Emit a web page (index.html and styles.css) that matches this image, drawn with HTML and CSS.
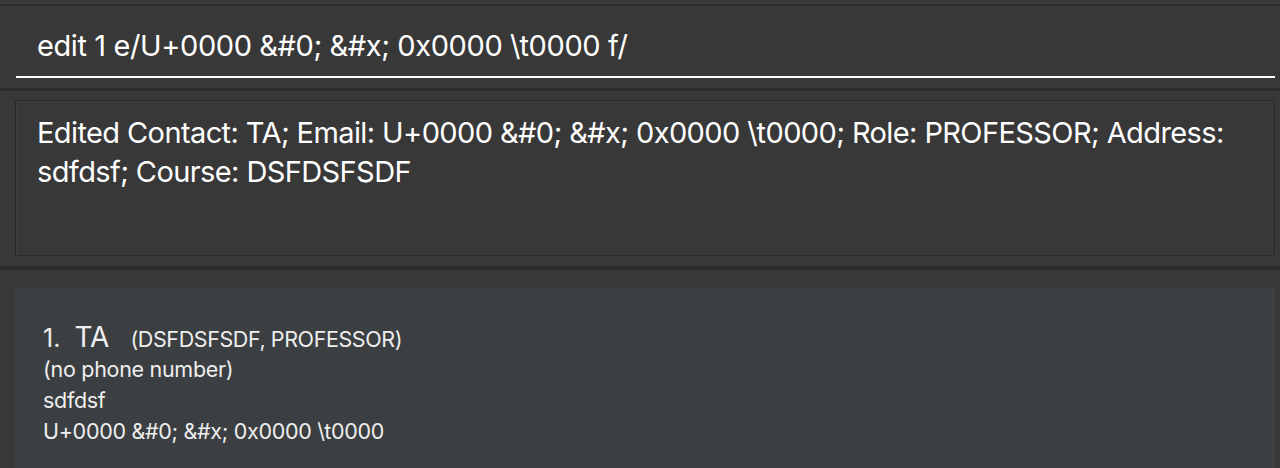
FILE: index.html
```html
<!DOCTYPE html>
<html>
<head>
<meta charset="utf-8">
<link rel="stylesheet" href="styles.css">
</head>
<body>
<div class="app">
  <div class="top-strip"></div>
  <div class="command-pane">
    <div class="command-input">edit 1 e/U+0000 &amp;#0; &amp;#x; 0x0000 \t0000 f/</div>
  </div>
  <div class="divider"></div>
  <div class="result-pane">
    <div class="result-box">Edited Contact: TA; Email: U+0000 &amp;#0; &amp;#x; 0x0000 \t0000; Role: PROFESSOR; Address: sdfdsf; Course: DSFDSFSDF</div>
  </div>
  <div class="divider thick"></div>
  <div class="list-pane">
    <div class="card">
      <div class="card-head"><span class="idx">1.</span><span class="name">TA</span><span class="tags">(DSFDSFSDF, PROFESSOR)</span></div>
      <div class="line">(no phone number)</div>
      <div class="line">sdfdsf</div>
      <div class="line">U+0000 &amp;#0; &amp;#x; 0x0000 \t0000</div>
    </div>
  </div>
</div>
</body>
</html>
```

FILE: styles.css
```css
* { box-sizing: border-box; }
html, body { margin: 0; padding: 0; }
body {
  width: 1280px;
  height: 468px;
  overflow: hidden;
  background: #383838;
  font-family: Inter, "Liberation Sans", sans-serif;
  color: #ffffff;
}
.app { display: flex; flex-direction: column; height: 468px; }
.top-strip {
  height: 6px;
  background: #3a3a3a;
  border-bottom: 2px solid #2e2e2e;
}
.command-pane {
  height: 82px;
  padding: 18px 5px 0 16px;
}
.command-input {
  height: 54px;
  padding-left: 21px;
  padding-top: 2px;
  font-size: 29px;
  letter-spacing: -0.4px;
  line-height: 40px;
  border-bottom: 2px solid #ffffff;
}
.divider { height: 3px; background: #2b2b2b; }
.divider.thick { height: 4px; }
.result-pane {
  height: 175px;
  padding: 9px 5px 10px 15px;
}
.result-box {
  height: 156px;
  border: 1px solid #2a2a2a;
  box-shadow: inset 1px 1px 0 #3e3e3e;
  padding: 12px 20px 0 21px;
  font-size: 29px;
  letter-spacing: -0.6px;
  line-height: 39px;
}
.list-pane {
  flex: 1;
  padding: 18px 5px 0 14px;
}
.card {
  height: 100%;
  background: #3c3f41;
  padding: 32px 0 0 29px;
  color: #eeeeee;
}
.card-head { display: flex; align-items: baseline; height: 34px; }
.idx { font-size: 25px; margin-right: 14px; }
.name { font-size: 28px; margin-right: 21px; }
.tags { font-size: 21.5px; letter-spacing: -0.4px; }
.line { font-size: 21.5px; letter-spacing: -0.3px; line-height: 31px; }
```
